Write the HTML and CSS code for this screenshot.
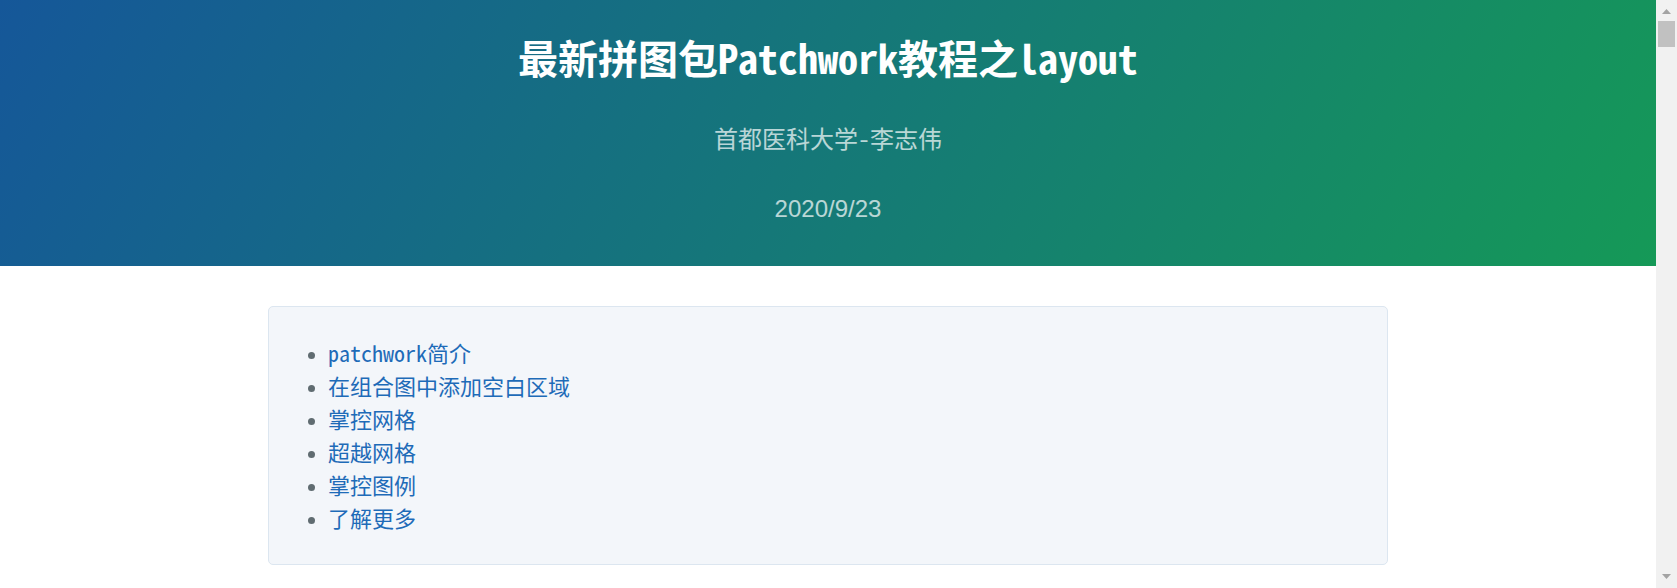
FILE: index.html
```html
<!DOCTYPE html>
<html lang="zh-CN">
<head>
<meta charset="utf-8">
<title>最新拼图包Patchwork教程之layout</title>
<link rel="stylesheet" href="styles.css">
</head>
<body>
<div class="page">
  <header class="page-header">
    <h1 class="project-name">最新拼图包Patchwork教程之layout</h1>
    <h2 class="project-author">首都医科大学-李志伟</h2>
    <h3 class="project-date">2020/9/23</h3>
  </header>
  <main class="main-content">
    <nav class="toc">
      <ul class="toc-list">
        <li><a href="#patchwork简介">patchwork简介</a></li>
        <li><a href="#在组合图中添加空白区域">在组合图中添加空白区域</a></li>
        <li><a href="#掌控网格">掌控网格</a></li>
        <li><a href="#超越网格">超越网格</a></li>
        <li><a href="#掌控图例">掌控图例</a></li>
        <li><a href="#了解更多">了解更多</a></li>
      </ul>
    </nav>
  </main>
</div>
<div class="scrollbar" aria-hidden="true">
  <div class="sb-btn sb-up">
    <svg width="9" height="5" viewBox="0 0 9 5"><path d="M4.5 0L9 5H0Z" fill="#a3a3a3"/></svg>
  </div>
  <div class="sb-track"><div class="sb-thumb"></div></div>
  <div class="sb-btn sb-down">
    <svg width="9" height="5" viewBox="0 0 9 5"><path d="M0 0H9L4.5 5Z" fill="#a3a3a3"/></svg>
  </div>
</div>
</body>
</html>
```

FILE: styles.css
```css
html {
  background: #fff;
}

body {
  margin: 0;
  display: flex;
  align-items: flex-start;
  font-family: "Noto Sans Mono CJK SC", "Noto Sans CJK SC", monospace;
  color: #606c71;
}

.page {
  flex: 1;
  min-width: 0;
}

/* window scrollbar */
.scrollbar {
  position: sticky;
  top: 0;
  flex: 0 0 21px;
  height: 100vh;
  display: flex;
  flex-direction: column;
  background: #f1f1f1;
}

.sb-btn {
  flex: 0 0 17px;
  display: flex;
  justify-content: center;
}

.sb-up {
  align-items: flex-end;
  padding-bottom: 3px;
  box-sizing: border-box;
}

.sb-down {
  align-items: flex-start;
  padding-top: 3px;
  box-sizing: border-box;
}

.sb-btn svg {
  display: block;
}

.sb-track {
  flex: 1;
  padding: 4px 2px 0;
}

.sb-thumb {
  height: 26px;
  background: #c1c1c1;
}

/* header */
.page-header {
  padding: 33px 16px 39px;
  text-align: center;
  color: #fff;
  background-color: #159957;
  background-image: linear-gradient(120deg, #155799, #159957);
}

.project-name {
  margin: 0;
  font-size: 40px;
  line-height: 48px;
  font-weight: 700;
}

.project-author {
  margin: 39px 0 0;
  font-size: 24px;
  line-height: 36px;
  font-weight: 400;
  opacity: 0.7;
}

.project-date {
  margin: 35px 0 0;
  font-family: "Liberation Sans", Arial, sans-serif;
  font-size: 24px;
  line-height: 36px;
  font-weight: 400;
  opacity: 0.7;
}

/* content */
.main-content {
  max-width: 1120px;
  margin: 0 auto;
  padding-top: 40px;
}

.toc {
  background: #f3f6fa;
  border: 1px solid #dce6f0;
  border-radius: 5px;
  padding: 29px 0 30px;
}

.toc-list {
  margin: 0;
  padding-left: 59px;
  font-size: 22px;
  line-height: 33px;
  color: #606c71;
}

.toc-list li::marker {
  font-size: 17px;
}

.toc-list a {
  color: #1e6bb8;
  text-decoration: none;
}
```
